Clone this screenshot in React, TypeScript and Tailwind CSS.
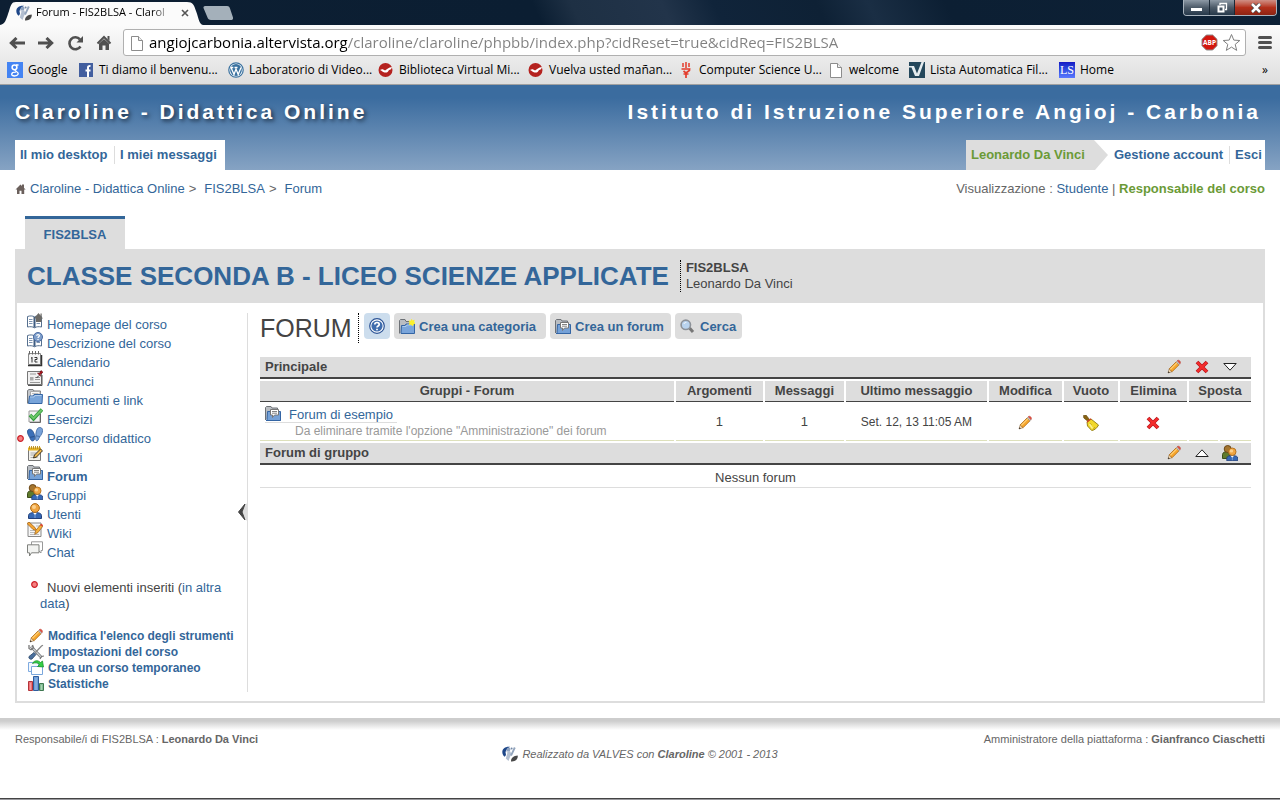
import type { ReactNode } from "react";

function Svg({ children, size = 16 }: { children: ReactNode; size?: number }) {
  return (
    <svg width={size} height={size} viewBox="0 0 16 16" fill="none" className="block shrink-0" aria-hidden="true">
      {children}
    </svg>
  );
}

/* ---------- Claroline icons ---------- */

function ClarolineLogo() {
  return (
    <Svg>
      <path d="M8 .8C3.500.3.4 2.500.3 6c0 2 1 3.800 2.400 4.800L4 9 3.500 6 5 3.200Z" fill="#1d4688" />
      <circle cx="6.500" cy="3.500" r="1.900" fill="#8fa3c0" />
      <path d="M3.500 5.500 5.500 6.500 3.800 12.500 6.500 15 8 11l1.500-3L8 5Z" fill="#b3bfd0" />
      <path d="M9 9.500 10.800 5.800 12.800 1.500" stroke="#93a5bd" strokeWidth="1.900" />
      <circle cx="9.600" cy="2.600" r="1" fill="#7288a6" />
      <path d="M9 15.500c-.3-3 2.500-5.800 6.700-6 .5 3.200-2 6.500-6.700 6Z" fill="#484848" />
    </Svg>
  );
}

function BookBase() {
  return (
    <>
      <path d="M.5 3.500c2.500-.8 5-.8 7 .3 2-1.100 4.500-1.100 7-.3v10.500c-2.500-.5-5-.5-7 .8-2-1.300-4.500-1.300-7-.8Z" fill="#fff" stroke="#56708f" />
      <path d="M7.500 4v10.500" stroke="#3d5b80" strokeWidth="2" />
      <path d="M2 6.500h3.500M2 8.500h3.500M2 10.500h3.500M9.500 10.500H13M9.500 8.500H13" stroke="#7c93b0" />
    </>
  );
}

function HomeBookIcon() {
  return (
    <Svg>
      <BookBase />
      <path d="M7 5.500 11.500 0 16 5.500h-1.500V9H9V5.500Z" fill="#6c6a66" />
      <path d="M13.500.5h1.200v3h-1.200z" fill="#6c6a66" />
    </Svg>
  );
}

function HelpBookIcon() {
  return (
    <Svg>
      <BookBase />
      <circle cx="11" cy="5" r="4.500" fill="#7f9fcb" stroke="#4a6ba2" />
      <path d="M9.600 3.800c.2-1.600 2.900-1.500 2.800 0 0 1-1.400 1-1.400 2.200M11 7v1" stroke="#fff" strokeWidth="1.200" />
    </Svg>
  );
}

function CalendarIcon() {
  return (
    <Svg>
      <path d="M1.500 2.500h12v11h-12z" fill="#f4f4f4" stroke="#8a8a8a" />
      <path d="M1 14.500h13.500V4" stroke="#333" strokeWidth="1.500" />
      <path d="M2.500 0v3.500M5.500 0v3.500M8.500 0v3.500M11.500 0v3.500" stroke="#666" />
      <path d="M5 6v5.500M4 7h1M7.500 6.500h2.500v2H8v2.500h2.500" stroke="#333" />
    </Svg>
  );
}

function AnnounceIcon() {
  return (
    <Svg>
      <path d="M.5 1.500h14v13H.5z" fill="#f1f1f1" stroke="#777" />
      <path d="M15 5v10.500H1" stroke="#555" />
      <path d="M3 4h6M8 7.500h5M8 9.500h5M3 12.500h10" stroke="#999" strokeWidth="1.200" />
      <path d="M3 7h3.500v3.500H3z" fill="#aaa" />
      <path d="M9.500 8 12 5.500" stroke="#333" />
      <path d="m10.500 3 2 .3L14 .5l2 1.800-2.700 2 .2 2Z" fill="#b3121d" stroke="#59080d" strokeWidth=".6" />
    </Svg>
  );
}

function FolderIcon() {
  return (
    <Svg>
      <path d="M.5 14.500V1.500L2 .5h4l1 1.500h6.500v5" fill="#c3c6ca" stroke="#77797c" />
      <path d="M3.500 2.500h9.500v6H3.500z" fill="#f6f6f6" stroke="#aaa" />
      <path d="M5 4.500h6.500" stroke="#bbb" />
      <path d="M1.500 14.500 2.500 7H6l1-1.500h8.500L15 14.500Z" fill="#78a4d9" stroke="#3465a4" />
      <path d="M3 8h4l1-1.500h6.500" stroke="#aecbec" />
    </Svg>
  );
}

function CheckIcon() {
  return (
    <Svg>
      <path d="M2 3h11v11H2z" fill="#f2f2f2" stroke="#999" />
      <path d="M13.500 6v8.500H3" stroke="#666" />
      <path d="m3 7 3.500 3.800L15 1.500" stroke="#2f9a3a" strokeWidth="3.600" />
      <path d="m3.300 7 3.200 3.400L14.800 1.800" stroke="#6cc768" strokeWidth="2" />
    </Svg>
  );
}

function StepsIcon() {
  return (
    <Svg>
      <path d="M.5 4C1 1.500 4.200 1.800 5.700 4c1.600 2.500 2.200 4.800 2.100 7 0 3-3 4-4.200 1.500C2.700 10 0 7 .5 4Z" fill="#3c70b8" stroke="#284f8a" strokeWidth=".8" />
      <path d="M3 10.300 7.500 9.500" stroke="#284f8a" />
      <path d="M10.500 1.500c2.200-2.200 5.200-.8 5.100 2-.1 2.800-1.500 4.500-3 6.500l-1.500 3c-1.500 1.500-2.800.5-2.500-2 .2-3 .2-7 1.900-9.500Z" fill="#79a2d8" stroke="#37639f" strokeWidth=".8" />
      <path d="m9 8.800 3.800.7" stroke="#37639f" strokeWidth=".8" />
    </Svg>
  );
}

function NotepadIcon() {
  return (
    <Svg>
      <path d="M1.500 2.500h12v12h-12z" fill="#f3f1ea" stroke="#777" />
      <path d="M1 1.500h13v3H1z" fill="#e7b62a" />
      <path d="M2.500 0v3M4.500 0v3M6.500 0v3M8.500 0v3M10.500 0v3M12.500 0v3" stroke="#b98b18" strokeWidth=".9" />
      <path d="M3.500 7h6M3.500 9h5M3.500 11.500h7" stroke="#aaa" />
      <path d="m6.500 12 1-3L13.500 3l2 1.800-6 6.200Z" fill="#efb74c" stroke="#3d3524" />
    </Svg>
  );
}

function ForumIcon() {
  return (
    <Svg>
      <path d="M.5 14V1.500L1.500.5h4.500L7 2h5.500v4" fill="#b9bdc2" stroke="#6d7176" />
      <path d="M2 14.500 2.500 5.500H15.500v9Z" fill="#75a1d7" stroke="#3465a4" />
      <path d="M1 14.500h14.500" stroke="#3465a4" />
      <path d="M5.500 3.500h8v5.500h-4L7.500 11.500V9h-2Z" fill="#fff" stroke="#777" />
      <path d="M7 5.500h5M7 7.200h5" stroke="#777" strokeWidth=".9" />
    </Svg>
  );
}

function UserShape() {
  return (
    <>
      <path d="M1.500 15.500v-3C1.500 10.500 4 9.500 8 9.500s6.500 1 6.500 3v3Z" fill="#3668b4" stroke="#23407a" />
      <path d="M6 9.800 8 12l2-2.200" fill="#fff" />
      <path d="M8 11v4" stroke="#9db9e0" strokeWidth=".8" />
      <circle cx="8" cy="5" r="4.400" fill="#f0a541" stroke="#ad6a16" />
      <circle cx="7" cy="4" r="2" fill="#fbd08c" />
    </>
  );
}

function UserIcon() {
  return (
    <Svg>
      <UserShape />
    </Svg>
  );
}

function GroupIcon() {
  return (
    <Svg>
      <path d="M.5 13.500v-4C.5 7.500 3 6.500 6 6.500l3 7Z" fill="#5f7a2b" stroke="#3c4d1a" />
      <circle cx="5.700" cy="4" r="3.500" fill="#a4752f" stroke="#6b4716" />
      <g transform="translate(3.500 2.500) scale(.85)">
        <UserShape />
      </g>
    </Svg>
  );
}

function WikiIcon() {
  return (
    <Svg>
      <path d="M1 1h13v13.500H1z" fill="#f6f6f6" stroke="#888" />
      <path d="M3 8.500h5M3 10.500h5M3 12.500h9M9 4h4" stroke="#bbb" />
      <path d="m0 1.500 2-1.500 6 5.500 1.500 3L6 7.500Z" fill="#f3a433" stroke="#9c5a10" strokeWidth=".7" />
      <path d="m14 2.200 2 1.800-5 6.500-3.300 1.800 1-3.800Z" fill="#f5b13a" stroke="#9c5a10" strokeWidth=".7" />
      <path d="m13 3.200 1.300-1.500L16 3l-1.200 1.600Z" fill="#e0483a" />
    </Svg>
  );
}

function ChatIcon() {
  return (
    <Svg>
      <path d="M4.500.8h11v8.700h-1.500V12l-2.500-2.500h-7Z" fill="#fff" stroke="#999" />
      <path d="M.5 3.800H12v8H4.500L2.500 15v-3.200h-2Z" fill="#f2f3f1" stroke="#7f817d" />
    </Svg>
  );
}

function PencilIcon() {
  return (
    <Svg>
      <path d="m2 14 1.200-4.200 2.900 2.900Z" fill="#f6dcb3" stroke="#8d6b45" strokeWidth=".6" />
      <path d="m2 14 .5-1.800L3.800 13.500Z" fill="#222" />
      <path d="m3.200 9.800 7-7 2.900 2.900-7 7Z" fill="#f7a62d" stroke="#a5600e" strokeWidth=".7" />
      <path d="m4.300 10.300 7-7" stroke="#fdd37c" strokeWidth="1.100" />
      <path d="m10.200 2.800 1-1 2.900 2.900-1 1Z" fill="#c8ccd2" stroke="#888" strokeWidth=".4" />
      <path d="m11.200 1.800.6-.5c1.200-.6 3.100 1.200 2.600 2.500l-.3.900Z" fill="#e9503f" stroke="#b0352a" strokeWidth=".5" />
    </Svg>
  );
}

function DeleteIcon() {
  return (
    <Svg>
      <path d="m3 3 10 10M13 3 3 13" stroke="#b3141a" strokeWidth="3.800" />
      <path d="m3.300 3.300 9.400 9.400M12.700 3.300 3.300 12.700" stroke="#f32c2c" strokeWidth="2.500" />
    </Svg>
  );
}

function BroomIcon() {
  return (
    <Svg>
      <path d="m.5.5 2.500-.5 3.500 4.500-2 1.500L.8 3Z" fill="#8a6412" stroke="#5a3f07" strokeWidth=".6" />
      <path d="M4 7 8 4l7.500 6c-1.500 3-3.800 5.200-6.800 5.500L4.500 11Z" fill="#f2d829" stroke="#8e7a0c" strokeWidth=".9" />
      <path d="m4 7 4-3.200" stroke="#d33a22" strokeWidth="1.300" />
      <path d="m10.500 14 1.500-2M7 8l1.500 2" stroke="#c1a616" strokeWidth=".9" />
      <path d="m6.500 9 3 4.500" stroke="#fbf092" strokeWidth="1.400" />
    </Svg>
  );
}

function TriangleIcon({ up = false }: { up?: boolean }) {
  return (
    <Svg>
      <path d={up ? "M1.800 11.500h12.400L8 4.800Z" : "M1.800 4.500h12.400L8 11.200Z"} fill="#fff" stroke="#222" />
    </Svg>
  );
}

function ToolsIcon() {
  return (
    <Svg>
      <path d="m3 2.500 10.500 11" stroke="#6a6d71" strokeWidth="2.600" />
      <path d="m3 2.500 10.500 11" stroke="#d4d7da" strokeWidth="1.200" />
      <path d="M1 1v3.500l2 1.300 2.500-2L4.500 1" stroke="#777" strokeWidth="1.300" />
      <path d="m7 9 6.500-7 1.500-.8" stroke="#888" strokeWidth="1.300" />
      <path d="m12 15 1.500-2.500 2.500-.5" stroke="#777" strokeWidth="1.200" />
      <path d="M6 8.500 8 10.500 4 15c-1.700 1-3.800-.8-3-2.500Z" fill="#4b6f9d" stroke="#2a4668" strokeWidth=".8" />
    </Svg>
  );
}

function CopyIcon() {
  return (
    <Svg>
      <path d="M.5 2.500h10v9H.5z" fill="#f2f7fd" stroke="#7fabe0" />
      <path d="M3.500 6.500h11v8h-11z" fill="#fff" stroke="#7aa7dc" />
      <path d="M4.500 3.500C6 .2 10-.2 12.500 2.500L14.500 1l1 6-6-.5 2-2C9.500 2.500 7 2.500 4.500 3.500Z" fill="#35cf45" stroke="#138c24" strokeWidth=".7" />
    </Svg>
  );
}

function StatsIcon() {
  return (
    <Svg>
      <path d="M.5 5.500h4v9h-4z" fill="#ef7378" stroke="#b33439" />
      <path d="M5.500.5h5v14h-5z" fill="#6f9fda" stroke="#2f5d9c" />
      <path d="M11.500 7.500h4v7h-4z" fill="#84bd94" stroke="#3f7750" />
      <path d="M2.500 7v7M8 2v12M13.500 9v5" stroke="#fff" strokeOpacity=".3" />
    </Svg>
  );
}

function HelpIcon() {
  return (
    <Svg>
      <circle cx="8" cy="8" r="7.300" fill="#fff" stroke="#2c5496" strokeWidth="1.200" />
      <circle cx="8" cy="8" r="5.600" fill="#3f6dad" />
      <path d="M5.800 6.500C5.900 3.800 10.300 3.900 10.200 6.500 10.200 8 8 8 8 9.600M8 10.700v1.600" stroke="#fff" strokeWidth="1.700" />
    </Svg>
  );
}

function NewFolderIcon() {
  return (
    <Svg>
      <path d="M.5 14.500V1.500L1.500.5h4.500L7 2.500h6v4" fill="#b9bdc2" stroke="#6d7176" />
      <path d="M2 14.500 2.500 6.500H6L7 5h8.500v9.500Z" fill="#7aa5da" stroke="#3465a4" />
      <path d="M3.500 7.500H7L8 6h6.500" stroke="#aecbec" />
      <path d="m12.500-.5 1 2 2.200-.7-.6 2.300L17 4.500l-2.200.8-1.100 2-1.600-1.600-2.300.2.700-2.200-1-2.100 2.300.1Z" fill="#fbf02c" />
    </Svg>
  );
}

function SearchIcon() {
  return (
    <Svg>
      <path d="m9.500 9 3.500 4" stroke="#777" strokeWidth="3" />
      <circle cx="5.800" cy="5.800" r="4.700" fill="#b9d3ee" stroke="#8d9299" strokeWidth="1.600" />
      <path d="M3.800 5c.5-1 1.300-1.500 2.500-1.500" stroke="#fff" />
    </Svg>
  );
}

/* ---------- Browser icons ---------- */

function PageIcon() {
  return (
    <Svg>
      <path d="M2.500 1.500h7l4 4v10h-11z" fill="#fff" stroke="#8c8c8c" />
      <path d="M9.500 1.500v4h4" fill="#eee" stroke="#8c8c8c" />
    </Svg>
  );
}

function GoogleIcon() {
  return (
    <Svg>
      <path d="M0 0h16v16H0z" fill="#4484f3" />
      <circle cx="7.500" cy="5.300" r="2.400" stroke="#fff" strokeWidth="1.500" />
      <path d="M9 3h2.500M8.500 7.500c-1.500 1 .8 1.300 1.500 2.500M9 9.500c4 1.500 2 4.500-1.500 4.500-4 0-4-4 1.500-3.800" stroke="#fff" strokeWidth="1.300" />
    </Svg>
  );
}

function FacebookIcon() {
  return (
    <Svg>
      <path d="M1 1h14v14H1z" fill="#435f9f" />
      <path d="M10 15V5.500c0-1.200.6-1.700 2.500-1.500M7.500 8.500h5" stroke="#fff" strokeWidth="2" />
    </Svg>
  );
}

function WordpressIcon() {
  return (
    <Svg>
      <circle cx="8" cy="8" r="7.200" fill="#fff" stroke="#39719f" strokeWidth="1.200" />
      <circle cx="8" cy="8" r="5.900" fill="#39719f" />
      <path d="m3 5.500 3 7 2-5.500 2.200 5.500L13 5.500M2.500 5.500h2.800M6.500 5.500h3" stroke="#fff" strokeWidth="1.300" />
    </Svg>
  );
}

function LibraryIcon() {
  return (
    <Svg>
      <circle cx="7.500" cy="8" r="7" fill="#b5221f" />
      <path d="M2 8c2-1.500 3.500-.8 5 .5C9 7.500 10.500 5.500 14 5c-.5 2-1.500 3-3 3-.8 1.800-2.200 3-4.500 2.500C4.500 10 3.500 8.500 2 8Z" fill="#fff" />
    </Svg>
  );
}

function TorchIcon() {
  return (
    <Svg>
      <path d="M5 1v4M8 0v6M11 1v4" stroke="#e33c2c" strokeWidth="1.500" />
      <path d="M3.500 7h9M5.500 9l2.500 2 4-3M5.500 12h5M8 10v6" stroke="#e33c2c" strokeWidth="1.700" />
    </Svg>
  );
}

function ListaIcon() {
  return (
    <Svg>
      <path d="M0 0h16v16H0z" fill="#24475b" />
      <path d="M0 4h5l3 7.500L12.500 0H15L10 14H6L2.500 5.500H0Z" fill="#e5ecef" />
    </Svg>
  );
}

function LsIcon() {
  return (
    <span className="flex size-4 shrink-0 items-center justify-center bg-gradient-to-b from-[#1616c4] to-[#5a78ff] font-['Liberation_Serif',serif] text-[12px] leading-4 text-white">
      LS
    </span>
  );
}

const bookmarks = [
  { label: "Google", icon: <GoogleIcon />, width: "w-[71px]" },
  { label: "Ti diamo il benvenu...", icon: <FacebookIcon />, width: "w-[150px]" },
  { label: "Laboratorio di Video...", icon: <WordpressIcon />, width: "w-[150px]" },
  { label: "Biblioteca Virtual Mi...", icon: <LibraryIcon />, width: "w-[150px]" },
  { label: "Vuelva usted mañan...", icon: <LibraryIcon />, width: "w-[150px]" },
  { label: "Computer Science U...", icon: <TorchIcon />, width: "w-[150px]" },
  { label: "welcome", icon: <PageIcon />, width: "w-[81px]" },
  { label: "Lista Automatica Fil...", icon: <ListaIcon />, width: "w-[150px]" },
  { label: "Home", icon: <LsIcon />, width: "w-[60px]" },
];

function WindowControls() {
  return (
    <div className="mr-[3px] flex h-4 overflow-hidden rounded-b border border-t-0 border-[#a9b3bd] bg-[#3b4a59]">
      <button aria-label="Riduci" className="flex w-[26px] items-center justify-center border-r border-[#1a2836] bg-gradient-to-b from-[#8e9aa6] via-[#4d5b69] to-[#26384a]">
        <span className="mt-1 h-[3px] w-[11px] bg-white" />
      </button>
      <button aria-label="Ripristina" className="flex w-[25px] items-center justify-center border-r border-[#1a2836] bg-gradient-to-b from-[#8e9aa6] via-[#4d5b69] to-[#26384a]">
        <svg width="12" height="12" viewBox="0 0 12 12" fill="none">
          <path d="M4 3V1.500h6.500v6H9" stroke="#fff" strokeWidth="1.300" />
          <path d="M2.500 4.500h5v5h-5z" stroke="#fff" strokeWidth="2" />
        </svg>
      </button>
      <button aria-label="Chiudi" className="flex w-[41px] items-center justify-center bg-gradient-to-b from-[#cf8f85] via-[#b3301b] to-[#8d2413]">
        <svg width="12" height="10" viewBox="0 0 12 10" fill="none">
          <path d="m2 1 8 8M10 1 2 9" stroke="#444" strokeWidth="4" />
          <path d="m2 1 8 8M10 1 2 9" stroke="#fff" strokeWidth="2.500" />
        </svg>
      </button>
    </div>
  );
}

function BrowserChrome() {
  return (
    <div className="font-['Open_Sans','Noto_Sans',sans-serif] text-xs text-black">
      {/* Tab strip */}
      <div className="flex h-[25px] items-start bg-[linear-gradient(65deg,#0d1f33_0%,#0b1e32_42%,#1e3044_45%,#22344a_52%,#10243a_56%,#0e2135_64%,#1a2e44_68%,#0c1f33_74%,#0d2136_100%)]">
        <div className="relative h-[25px] w-[203px]">
          <svg className="absolute inset-0" width="203" height="25" viewBox="0 0 203 25" aria-hidden="true">
            <path d="M0 25C5 24 6 20 8 14 11 5 11 2 16 2h171c6 0 7 3 9 9 3 8 3 13 7 14Z" fill="#fbfbfb" />
          </svg>
          <div className="relative flex h-[25px] items-center pl-4">
            <ClarolineLogo />
            <span className="ml-1 w-[137px] text-[11px] whitespace-nowrap [mask-image:linear-gradient(to_right,black_85%,transparent)]">
              Forum - FIS2BLSA - Clarol
            </span>
            <button aria-label="Chiudi scheda" className="ml-2">
              <svg width="8" height="8" viewBox="0 0 8 8" className="block">
                <path d="m1 1 6 6M7 1 1 7" stroke="#555" strokeWidth="1.600" />
              </svg>
            </button>
          </div>
        </div>
        <button aria-label="Nuova scheda" className="mt-[6px]">
          <svg width="30" height="14" viewBox="0 0 30 14" className="block">
            <path d="M2 0h22c2 0 2.500 1 3 2.500l3 9c.3 1.500-.5 2.500-2 2.500H8c-2 0-3-1-3.500-2.500L.5 2C.2 1 1 0 2 0Z" fill="#a4b0ba" />
          </svg>
        </button>
        <div className="ml-auto">
          <WindowControls />
        </div>
      </div>

      {/* Toolbar */}
      <div className="border-b border-[#a0a0a0] bg-gradient-to-b from-[#fbfbfb] to-[#dedede]">
        <div className="flex items-center pt-1 pr-2 pl-[9px]">
          <button aria-label="Indietro" className="w-[29px]">
            <svg width="16" height="12" viewBox="0 0 16 12" fill="none">
              <path d="M16 6H3M7.500 1 2.300 6l5.200 5" stroke="#505050" strokeWidth="3" />
            </svg>
          </button>
          <button aria-label="Avanti" className="w-[29px]">
            <svg width="16" height="12" viewBox="0 0 16 12" fill="none">
              <path d="M0 6h13M8.500 1l5.200 5-5.200 5" stroke="#505050" strokeWidth="3" />
            </svg>
          </button>
          <button aria-label="Ricarica" className="w-[29px]">
            <svg width="18" height="16" viewBox="0 0 18 16" fill="none">
              <path d="M13.500 11.500A6 6 0 1 1 13 4.300" stroke="#505050" strokeWidth="2.600" />
              <path d="M16 1v6.500H9.500Z" fill="#505050" />
            </svg>
          </button>
          <button aria-label="Pagina iniziale" className="w-[27px]">
            <svg width="16" height="16" viewBox="0 0 16 16" fill="none">
              <path d="M1.500 8.500 8 2l6.500 6.500" stroke="#505050" strokeWidth="2" />
              <path d="M3 8.500 8 4l5 4.500V15h-3.500v-4.500h-3V15H3ZM11.500 1h2v5l-2-2Z" fill="#505050" />
            </svg>
          </button>
          <div className="flex h-[27px] flex-1 items-center rounded-[3px] border border-[#b0b0b0] bg-white pr-1 pl-[5px]">
            <PageIcon />
            <input
              type="text"
              aria-label="Indirizzo"
              defaultValue="angiojcarbonia.altervista.org/claroline/claroline/phpbb/index.php?cidReset=true&cidReq=FIS2BLSA"
              className="ml-1 h-6 min-w-0 flex-1 bg-[linear-gradient(to_right,#000_198px,#808080_198px)] bg-clip-text pb-[2px] text-[15px] text-transparent outline-none"
            />
            <button aria-label="Adblock Plus" className="mr-1">
              <svg width="17" height="17" viewBox="0 0 17 17" className="block">
                <path d="M5.300 1h6.400L16 5.300v6.400L11.700 16H5.300L1 11.700V5.300Z" fill="#d3160e" stroke="#8d8d8d" />
                <text x="8.500" y="11" textAnchor="middle" fontSize="6.500" fontWeight="700" fill="#fff">ABP</text>
              </svg>
            </button>
            <button aria-label="Aggiungi ai preferiti">
              <svg width="19" height="19" viewBox="0 0 19 19" className="block">
                <path d="m9.500 1.500 2.300 5.600 6 .4-4.600 3.900 1.500 6-5.200-3.300-5.200 3.300 1.500-6L1.200 7.500l6-.4Z" fill="#fff" stroke="#808080" strokeLinejoin="round" />
              </svg>
            </button>
          </div>
          <button aria-label="Menu" className="ml-3 flex flex-col gap-[2px]">
            <span className="h-[3px] w-[14px] rounded-sm bg-[#505050]" />
            <span className="h-[3px] w-[14px] rounded-sm bg-[#505050]" />
            <span className="h-[3px] w-[14px] rounded-sm bg-[#505050]" />
          </button>
        </div>
        <nav aria-label="Preferiti" className="flex h-7 items-center pl-[7px]">
          {bookmarks.map((b) => (
            <a key={b.label} href="#" className={`flex shrink-0 items-center gap-[5px] whitespace-nowrap ${b.width}`}>
              {b.icon}
              {b.label}
            </a>
          ))}
          <button aria-label="Altri preferiti" className="mr-3 ml-auto">»</button>
        </nav>
      </div>
    </div>
  );
}

/* ---------- Page ---------- */

function Banner() {
  return (
    <header className="bg-[linear-gradient(to_bottom,#3b6c9f_15%,#86a3c3)] px-[15px] font-bold">
      <div className="flex h-[55px] items-center justify-between pb-[2px] text-[21px] tracking-[3px] whitespace-nowrap text-white">
        <a href="#" className="[text-shadow:2px_2px_4px_#1b2c40]">Claroline - Didattica Online</a>
        <a href="#" className="mr-1">Istituto di Istruzione Superiore Angioj - Carbonia</a>
      </div>
      <div className="flex h-[30px] justify-between leading-[18px] whitespace-nowrap text-[#336699]">
        <nav aria-label="Utente" className="flex items-center bg-white">
          <a href="#" className="w-[100px] border-r border-[#ddd] pl-[5px]">Il mio desktop</a>
          <a href="#" className="w-[110px] pl-[5px]">I miei messaggi</a>
        </nav>
        <nav aria-label="Account" className="flex items-center bg-white">
          <span className="flex h-full w-[127px] items-center bg-[#ddd] pl-[5px] text-[#6b9a37]">Leonardo Da Vinci</span>
          <svg width="16" height="30" viewBox="0 0 16 30" aria-hidden="true">
            <path d="M0 0h1l14 15L2 30H0Z" fill="#ddd" />
          </svg>
          <a href="#" className="w-[121px] border-r border-[#ddd] pl-[5px]">Gestione account</a>
          <a href="#" className="w-[35px] pl-[5px]">Esci</a>
        </nav>
      </div>
    </header>
  );
}

const tools = [
  { label: "Homepage del corso", icon: <HomeBookIcon /> },
  { label: "Descrizione del corso", icon: <HelpBookIcon /> },
  { label: "Calendario", icon: <CalendarIcon /> },
  { label: "Annunci", icon: <AnnounceIcon /> },
  { label: "Documenti e link", icon: <FolderIcon /> },
  { label: "Esercizi", icon: <CheckIcon /> },
  { label: "Percorso didattico", icon: <StepsIcon />, isNew: true },
  { label: "Lavori", icon: <NotepadIcon /> },
  { label: "Forum", icon: <ForumIcon />, current: true },
  { label: "Gruppi", icon: <GroupIcon /> },
  { label: "Utenti", icon: <UserIcon /> },
  { label: "Wiki", icon: <WikiIcon /> },
  { label: "Chat", icon: <ChatIcon /> },
];

const manageTools = [
  { label: "Modifica l'elenco degli strumenti", icon: <PencilIcon /> },
  { label: "Impostazioni del corso", icon: <ToolsIcon /> },
  { label: "Crea un corso temporaneo", icon: <CopyIcon /> },
  { label: "Statistiche", icon: <StatsIcon /> },
];

function RedDot() {
  return (
    <svg width="7" height="7" viewBox="0 0 7 7" className="block" aria-hidden="true">
      <circle cx="3.500" cy="3.500" r="2.800" fill="#f58080" stroke="#cc2029" strokeWidth="1.200" />
    </svg>
  );
}

function Sidebar() {
  return (
    <aside className="relative w-[221px] shrink-0 border-r border-[#ddd] text-[#336699]">
      <ul>
        {tools.map((t) => (
          <li key={t.label} className="relative h-[19px]">
            {t.isNew && (
              <span className="absolute top-2 -left-[10px]">
                <RedDot />
              </span>
            )}
            <a href="#" className={`flex gap-1 ${t.current ? "font-bold" : ""}`}>
              {t.icon}
              <span className="pt-1 leading-4">{t.label}</span>
            </a>
          </li>
        ))}
      </ul>
      <p className="mt-5 pr-5 pl-[13px] -indent-[9px] leading-4 text-[#444]">
        <span className="mr-[9px] inline-block align-[4px]">
          <RedDot />
        </span>
        Nuovi elementi inseriti (<a href="#" className="text-[#336699]">in altra data</a>)
      </p>
      <ul className="mt-4 text-xs font-bold">
        {manageTools.map((t) => (
          <li key={t.label}>
            <a href="#" className="flex gap-1 pl-[1px] leading-4 whitespace-nowrap">
              {t.icon}
              {t.label}
            </a>
          </li>
        ))}
      </ul>
      <button aria-label="Nascondi menu" className="absolute top-[190px] right-0">
        <svg width="10" height="18" viewBox="0 0 10 18" className="block">
          <path d="M10 0v18L3 9Z" fill="#ddd" />
          <path d="M8 1 1.500 9 8 17 5 9Z" fill="#444" stroke="#444" />
        </svg>
      </button>
    </aside>
  );
}

function CommandLink({ icon, label, width }: { icon: ReactNode; label: string; width: string }) {
  return (
    <a href="#" className={`flex h-[26px] items-center gap-1 rounded bg-[#ddd] pt-px pl-[5px] font-bold whitespace-nowrap text-[#336699] ${width}`}>
      {icon}
      {label}
    </a>
  );
}

const columns = ["Argomenti", "Messaggi", "Ultimo messaggio", "Modifica", "Vuoto", "Elimina"];

const barCell = "border-b-2 border-[#444] bg-[#ddd] px-[5px] text-left font-bold";
const headCell = "h-[21px] border-b border-[#444] bg-[#ddd] text-center font-bold leading-4";
const bodyCell = "h-[37px] border-b border-[#dde0bb] text-center";

function ForumTable() {
  return (
    <table className="-mx-[2px] mt-3 w-[calc(100%+4px)] table-fixed border-separate border-spacing-[2px] text-[#444]">
      <colgroup>
        <col />
        <col className="w-[87px]" />
        <col className="w-[79px]" />
        <col className="w-[141px]" />
        <col className="w-[73px]" />
        <col className="w-[54px]" />
        <col className="w-[67px]" />
        <col className="w-[29px]" />
        <col className="w-[31px]" />
      </colgroup>
      <thead>
        <tr>
          <th colSpan={9} className={barCell}>
            <div className="flex h-5 items-center gap-3 pr-2">
              <span className="mr-auto">Principale</span>
              <button aria-label="Modifica Principale"><PencilIcon /></button>
              <button aria-label="Elimina Principale"><DeleteIcon /></button>
              <button aria-label="Sposta giù Principale"><TriangleIcon /></button>
            </div>
          </th>
        </tr>
        <tr>
          <th className={headCell}>Gruppi - Forum</th>
          {columns.map((c) => (
            <th key={c} className={headCell}>{c}</th>
          ))}
          <th colSpan={2} className={headCell}>Sposta</th>
        </tr>
      </thead>
      <tbody>
        <tr>
          <td className="border-b border-[#dde0bb] px-[5px] align-top">
            <a href="#" className="mt-[2px] flex h-[17px] w-fit gap-2 border-b border-[#ddd] pr-1 leading-[17px] text-[#336699]">
              <ForumIcon />
              Forum di esempio
            </a>
            <div className="pl-[30px] text-xs leading-4 text-[#999]">
              Da eliminare tramite l'opzione "Amministrazione" dei forum
            </div>
          </td>
          <td className={bodyCell}>1</td>
          <td className={bodyCell}>1</td>
          <td className={`${bodyCell} text-xs`}>Set. 12, 13 11:05 AM</td>
          <td className={bodyCell}>
            <button aria-label="Modifica" className="align-middle"><PencilIcon /></button>
          </td>
          <td className={bodyCell}>
            <button aria-label="Vuoto" className="align-middle"><BroomIcon /></button>
          </td>
          <td className={bodyCell}>
            <button aria-label="Elimina" className="align-middle"><DeleteIcon /></button>
          </td>
          <td className={bodyCell} />
          <td className={bodyCell} />
        </tr>
        <tr>
          <th colSpan={9} className={barCell}>
            <div className="flex h-5 items-center gap-3 pr-2">
              <span className="mr-auto">Forum di gruppo</span>
              <button aria-label="Modifica Forum di gruppo"><PencilIcon /></button>
              <button aria-label="Sposta su Forum di gruppo"><TriangleIcon up /></button>
              <button aria-label="Gruppi"><GroupIcon /></button>
            </div>
          </th>
        </tr>
        <tr>
          <td colSpan={9} className="h-[21px] border-b border-[#ddd] pt-px text-center leading-4">Nessun forum</td>
        </tr>
      </tbody>
    </table>
  );
}

export default function App() {
  return (
    <div className="flex min-h-screen flex-col bg-white font-['Liberation_Sans',Arial,sans-serif] text-[13px] text-[#666]">
      <BrowserChrome />
      <Banner />

      {/* Breadcrumb */}
      <div className="flex justify-between px-[15px] pt-[11px] leading-4">
        <nav aria-label="Percorso" className="flex items-center">
          <svg width="11" height="10" viewBox="0 0 11 10" className="mr-1 block" aria-hidden="true">
            <path d="M.5 5.500 5.500.5l1.500 1.500V.5h2V4l1.700 1.500H9.200V10H6.500V6.800h-2V10H2V5.500Z" fill="#6b605c" />
          </svg>
          <a href="#" className="text-[#336699]">Claroline - Didattica Online</a>
          <span className="mr-2 ml-1">&gt;</span>
          <a href="#" className="text-[#336699]">FIS2BLSA</a>
          <span className="mr-2 ml-1">&gt;</span>
          <a href="#" className="text-[#336699]">Forum</a>
        </nav>
        <div>
          Visualizzazione : <a href="#" className="text-[#336699]">Studente</a> |{" "}
          <a href="#" className="font-bold text-[#6b9a37]">Responsabile del corso</a>
        </div>
      </div>

      {/* Course */}
      <main className="mx-[15px] mt-[19px]">
        <a href="#" className="ml-[10px] flex h-[33px] w-[100px] items-center justify-center border-t-[3px] border-[#336699] bg-[#ddd] pt-[2px] font-bold text-[#336699]">
          FIS2BLSA
        </a>
        <div className="flex h-[54px] items-center bg-[#ddd] pl-3">
          <h1 className="text-[26px] font-bold whitespace-nowrap text-[#336699]">
            CLASSE SECONDA B - LICEO SCIENZE APPLICATE
          </h1>
          <div className="ml-[11px] border-l border-dotted border-black pl-[5px] leading-4 text-[#444]">
            <p className="font-bold">FIS2BLSA</p>
            <p>Leonardo Da Vinci</p>
          </div>
        </div>
        <div className="flex border-2 border-t-0 border-[#ddd] pt-[10px] pr-3 pb-[9px] pl-[10px]">
          <Sidebar />
          <section className="min-w-0 flex-1 pl-3">
            <div className="flex items-start">
              <h2 className="mr-[5px] w-[99px] border-r border-dotted border-black text-[25px] leading-[30px] text-[#444]">FORUM</h2>
              <div className="flex gap-1">
                <a href="#" aria-label="Aiuto" className="flex size-[26px] items-center justify-center rounded bg-[#ccdded]">
                  <HelpIcon />
                </a>
                <CommandLink icon={<NewFolderIcon />} label="Crea una categoria" width="w-[152px]" />
                <CommandLink icon={<ForumIcon />} label="Crea un forum" width="w-[121px]" />
                <CommandLink icon={<SearchIcon />} label="Cerca" width="w-[67px]" />
              </div>
            </div>
            <ForumTable />
          </section>
        </div>
      </main>

      {/* Footer */}
      <footer className="mt-[15px] text-[11px]">
        <div className="h-3 bg-[linear-gradient(to_bottom,#cdcdcd_25%,#fff)]" />
        <div className="flex justify-between px-[15px] pt-[3px] leading-[13px]">
          <p>
            Responsabile/i di FIS2BLSA : <a href="#" className="font-bold">Leonardo Da Vinci</a>
          </p>
          <p>
            Amministratore della piattaforma : <a href="#" className="font-bold">Gianfranco Ciaschetti</a>
          </p>
        </div>
        <div className="flex items-center justify-center gap-1 leading-4 italic">
          <ClarolineLogo />
          <p>
            Realizzato da VALVES con <a href="#" className="font-bold">Claroline</a> © 2001 - 2013
          </p>
        </div>
      </footer>
      <div className="mt-auto h-[2px] border-t border-[#444] bg-[#9a9a9e]" />
    </div>
  );
}
